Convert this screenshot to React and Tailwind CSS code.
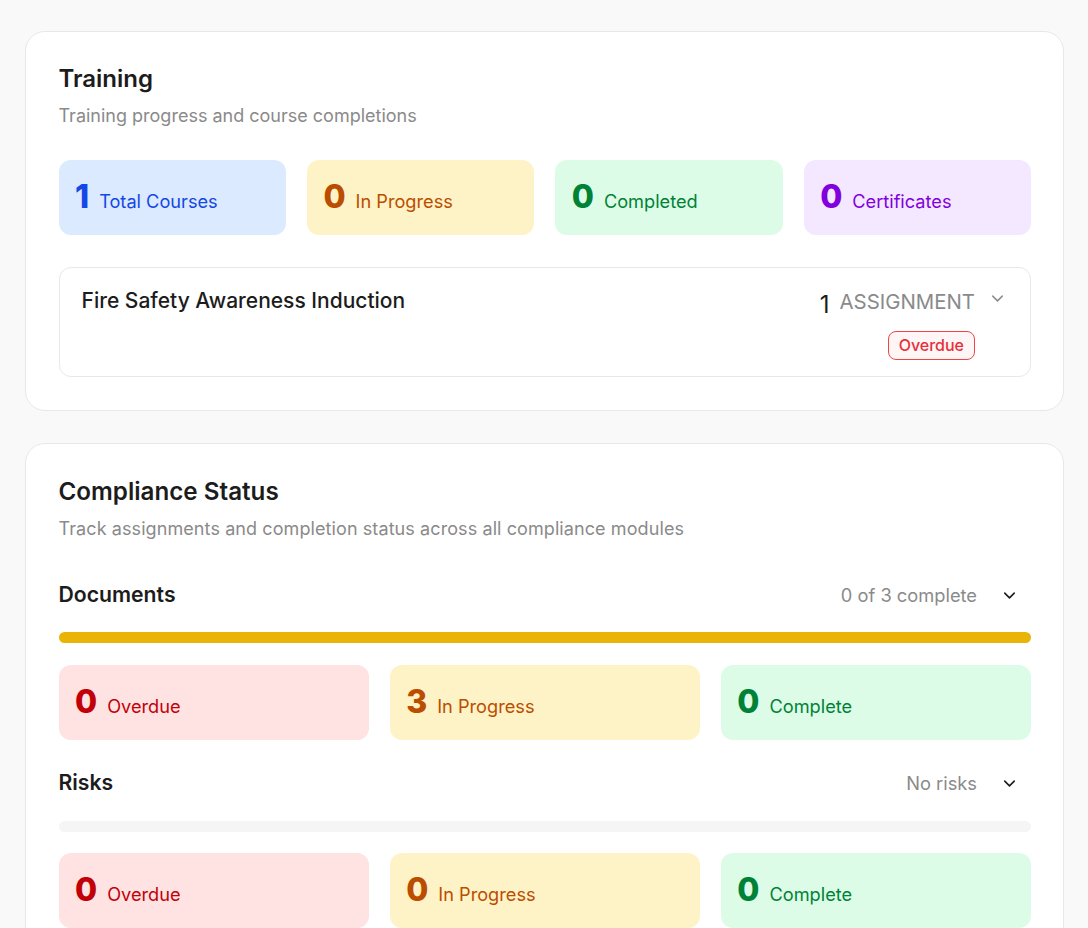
const font = { fontFamily: "Inter, 'Liberation Sans', sans-serif" };

function Chevron({ className, strokeWidth = 2 }) {
  return (
    <svg className={className} viewBox="0 0 24 24" fill="none" stroke="currentColor" strokeWidth={strokeWidth} strokeLinecap="round" strokeLinejoin="round">
      <path d="m6 9 6 6 6-6" />
    </svg>
  );
}

function Stat({ value, label, bg, text }) {
  return (
    <div className={`h-[75px] rounded-xl pl-[16.5px] pr-4 flex items-center gap-[10px] ${bg} ${text}`}>
      <span className="text-[32px] leading-none font-extrabold relative -top-[1px]">{value}</span>
      <span className="text-[18.2px] leading-6 relative top-[3px]">{label}</span>
    </div>
  );
}

function SectionHead({ title, right }) {
  return (
    <div className="flex items-center justify-between h-7">
      <h3 className="text-[21.2px] font-semibold text-[#1c1c1c] leading-7 relative -top-[1px]">{title}</h3>
      <div className="flex items-center gap-[23px] pr-[12px]">
        <span className="text-[18.3px] text-[#8a8a8a] leading-7">{right}</span>
        <Chevron className="w-[19px] h-[19px] text-[#1c1c1c]" />
      </div>
    </div>
  );
}

function Triple({ a, b, c }) {
  return (
    <div className="grid grid-cols-3 gap-[21px]">
      <Stat value={a} label="Overdue" bg="bg-[#ffe2e2]" text="text-[#c10007]" />
      <Stat value={b} label="In Progress" bg="bg-[#fef3c6]" text="text-[#bb4d00]" />
      <Stat value={c} label="Complete" bg="bg-[#dcfce7]" text="text-[#008236]" />
    </div>
  );
}

export default function App() {
  return (
    <div style={font} className="h-[928px] overflow-hidden bg-[#f9f9f9] pl-[25px] pr-[24px] pt-[31px]">
      <section className="bg-white border border-[#e8e8e8] rounded-[20px] h-[380px] pl-[32.5px] pr-8 pt-8">
        <h2 className="text-2xl leading-8 font-semibold text-[#1c1c1c] -mt-[1px]">Training</h2>
        <p className="mt-[7px] text-lg leading-7 text-[#8a8a8a]">Training progress and course completions</p>
        <div className="mt-[30px] grid grid-cols-4 gap-[21px]">
          <Stat value="1" label="Total Courses" bg="bg-[#dbeafe]" text="text-[#1447e6]" />
          <Stat value="0" label="In Progress" bg="bg-[#fef3c6]" text="text-[#bb4d00]" />
          <Stat value="0" label="Completed" bg="bg-[#dcfce7]" text="text-[#008236]" />
          <Stat value="0" label="Certificates" bg="bg-[#f3e8ff]" text="text-[#8200db]" />
        </div>
        <div className="mt-8 h-[110px] border border-[#e8e8e8] rounded-xl pl-[22px] pr-[23px] pt-[17px] flex justify-between">
          <span className="text-[21px] font-medium leading-8 text-[#1c1c1c]">Fire Safety Awareness Induction</span>
          <div className="flex flex-col items-end">
            <div className="flex items-center h-8 gap-[13px]">
              <div className="flex items-center gap-[10px]">
                <span className="text-2xl leading-8 text-[#1c1c1c] relative top-[4px]">1</span>
                <span className="text-[20.4px] leading-8 text-[#8a8a8a] uppercase relative top-[1px]">Assignment</span>
              </div>
              <Chevron className="w-[19px] h-[19px] text-[#8a8a8a] relative -top-[3px]" strokeWidth={1.8} />
            </div>
            <span className="mt-[14px] mr-[32px] h-[29px] px-[10px] pb-[1px] flex items-center rounded-lg border border-[#ef4444] bg-[#fef6f6] text-base font-medium text-[#e7303a]">Overdue</span>
          </div>
        </div>
      </section>

      <section className="mt-[32px] bg-white border border-[#e8e8e8] rounded-[20px] pl-[32.5px] pr-8 pt-8 h-[600px]">
        <h2 className="text-[24.2px] leading-8 font-semibold text-[#1c1c1c]">Compliance Status</h2>
        <p className="mt-[7px] text-lg tracking-[0.09px] leading-7 text-[#8a8a8a]">Track assignments and completion status across all compliance modules</p>
        <div className="mt-[38px]">
          <SectionHead title="Documents" right="0 of 3 complete" />
          <div className="mt-[23px] h-[11px] rounded-full bg-[#eab308]" />
          <div className="mt-[22px]"><Triple a="0" b="3" c="0" /></div>
        </div>
        <div className="mt-[29px]">
          <SectionHead title="Risks" right="No risks" />
          <div className="mt-[24px] h-[11px] rounded-full bg-[#f5f5f5]" />
          <div className="mt-[21px]"><Triple a="0" b="0" c="0" /></div>
        </div>
      </section>
    </div>
  );
}
